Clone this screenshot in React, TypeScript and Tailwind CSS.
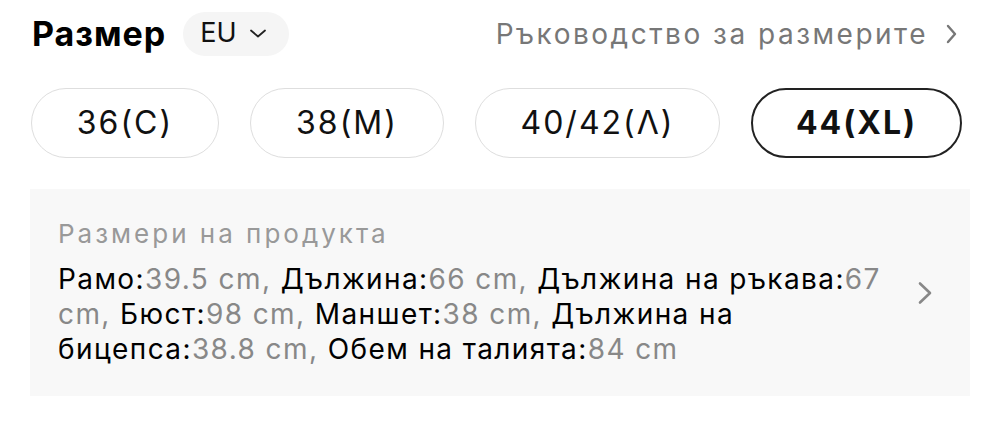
const sizes = [
  { label: '36(C)', w: 'w-[188px]' },
  { label: '38(M)', w: 'w-[194px]' },
  { label: '40/42(Λ)', w: 'w-[245px]' },
  { label: '44(XL)', w: 'w-[211px]', active: true },
];

const measures = [
  { name: 'Рамо', value: '39.5 cm' },
  { name: 'Дължина', value: '66 cm' },
  { name: 'Дължина на ръкава', value: '67 cm' },
  { name: 'Бюст', value: '98 cm' },
  { name: 'Маншет', value: '38 cm' },
  { name: 'Дължина на бицепса', value: '38.8 cm' },
  { name: 'Обем на талията', value: '84 cm' },
];

function Chevron({ className }: { className?: string }) {
  return (
    <svg viewBox="0 0 14 20" className={className} fill="none" stroke="currentColor" strokeWidth={2.4} strokeLinecap="round" strokeLinejoin="round">
      <path d="M4 2 L11 10 L4 18" />
    </svg>
  );
}

export default function App() {
  return (
    <div
      lang="bg"
      className="w-[1000px] h-[424px] bg-white px-[30px] pt-[11px]"
      style={{ fontFamily: 'Inter, "Noto Sans", sans-serif' }}
    >
      {/* Header */}
      <div className="flex items-center justify-between h-[45px] pl-[2px] pr-[12px]">
        <div className="flex items-center gap-[17px]">
          <h2 className="text-[34px] font-bold text-black tracking-[1px]">Размер</h2>
          <button className="flex items-center gap-[12px] h-[44px] pl-[17px] pr-[22px] rounded-full bg-[#f5f5f5] text-[27px] text-[#111]">
            EU
            <svg viewBox="0 0 18 9" className="w-[18px] h-[9px] text-[#222]" fill="none" stroke="currentColor" strokeWidth={1.8} strokeLinecap="round" strokeLinejoin="round">
              <path d="M2 1.5 L9 7.5 L16 1.5" />
            </svg>
          </button>
        </div>
        <a className="flex items-center gap-[16px] text-[28px] tracking-[2.5px] text-[#777]">
          Ръководство за размерите
          <Chevron className="w-[14px] h-[20px] text-[#777]" />
        </a>
      </div>

      {/* Size buttons */}
      <div className="flex gap-[31px] mt-[32px] pl-[1px]">
        {sizes.map((s) => (
          <button
            key={s.label}
            className={`${s.w} h-[70px] rounded-full flex items-center justify-center text-[32px] tracking-[2px] text-[#111] ${
              s.active ? 'border-2 border-[#222] font-bold' : 'border-[1.5px] border-[#dedede]'
            }`}
          >
            {s.label}
          </button>
        ))}
      </div>

      {/* Product measures */}
      <div className="mt-[31px] bg-[#f8f8f8] h-[207px] w-[940px] flex items-center pl-[28px] pr-[37px]">
        <div className="flex-1">
          <p className="text-[26px] tracking-[3px] text-[#999] leading-[30px]">Размери на продукта</p>
          <p className="mt-[13px] text-[28px] tracking-[1.4px] leading-[35px] text-black w-[850px]">
            {measures.map((m, i) => (
              <span key={m.name}>
                {m.name}:<span className="text-[#888]">{m.value}{i < measures.length - 1 ? ', ' : ''}</span>
              </span>
            ))}
          </p>
        </div>
        <svg viewBox="0 0 16 24" className="w-[16px] h-[24px] text-[#888]" fill="none" stroke="currentColor" strokeWidth={2.6} strokeLinecap="round" strokeLinejoin="round">
          <path d="M3 2.5 L13 12 L3 21.5" />
        </svg>
      </div>
    </div>
  );
}
